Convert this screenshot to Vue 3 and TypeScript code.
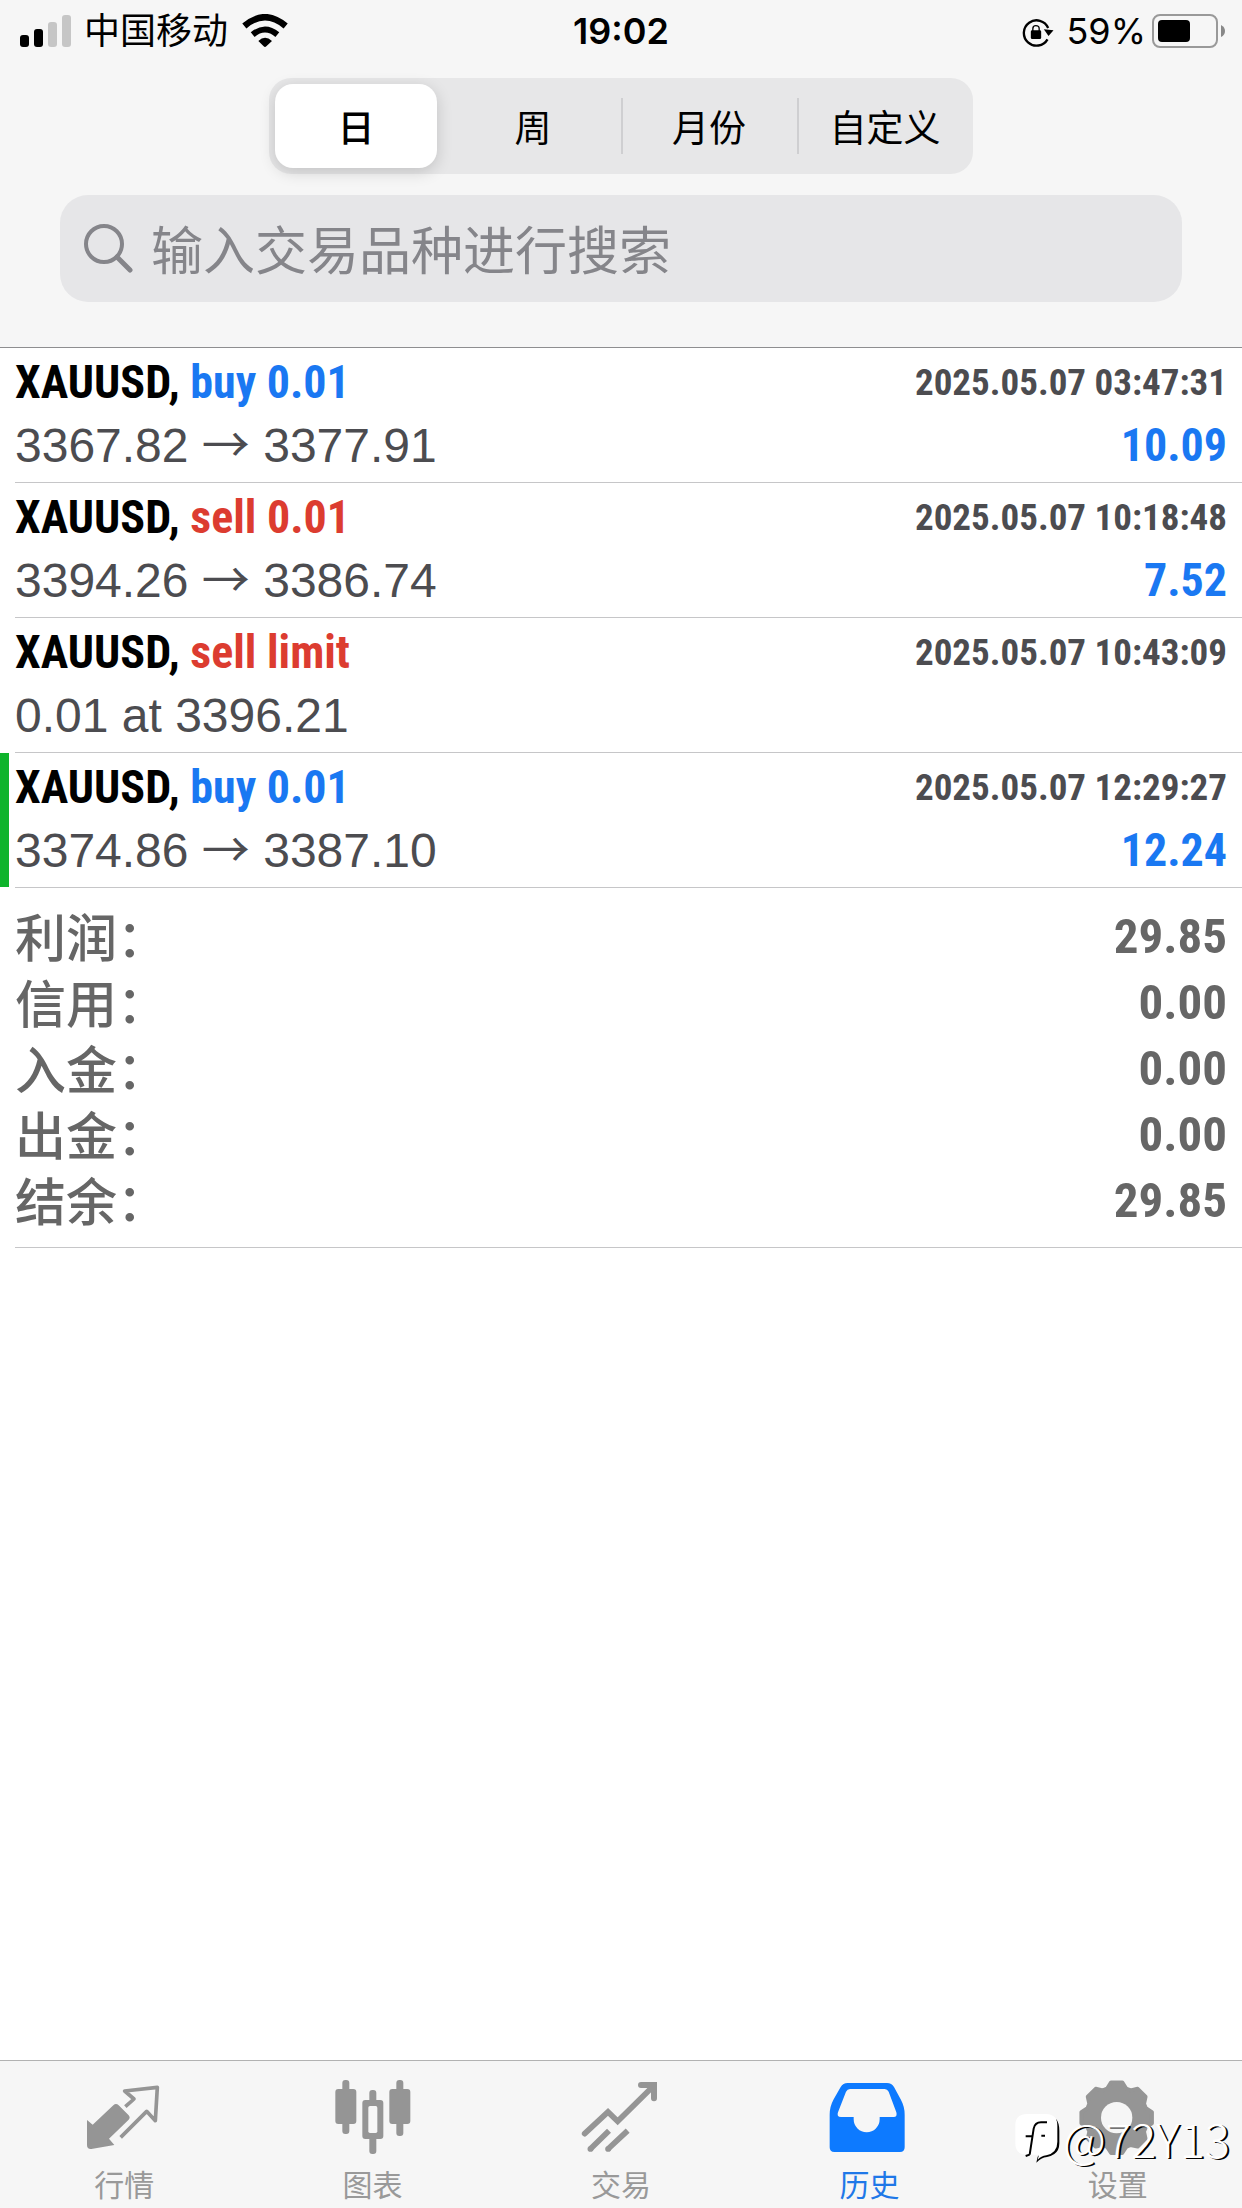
<script setup lang="ts">
import { ref } from 'vue'

interface Deal {
  symbol: string
  action: string
  side: 'buy' | 'sell'
  from: string
  to?: string
  time: string
  profit?: string
  marked?: boolean
}

const periods: string[] = ['日', '周', '月份', '自定义']
const period = ref<number>(0)
const query = ref<string>('')

const deals: Deal[] = [
  { symbol: 'XAUUSD', action: 'buy 0.01', side: 'buy', from: '3367.82', to: '3377.91', time: '2025.05.07 03:47:31', profit: '10.09' },
  { symbol: 'XAUUSD', action: 'sell 0.01', side: 'sell', from: '3394.26', to: '3386.74', time: '2025.05.07 10:18:48', profit: '7.52' },
  { symbol: 'XAUUSD', action: 'sell limit', side: 'sell', from: '0.01 at 3396.21', time: '2025.05.07 10:43:09' },
  { symbol: 'XAUUSD', action: 'buy 0.01', side: 'buy', from: '3374.86', to: '3387.10', time: '2025.05.07 12:29:27', profit: '12.24', marked: true },
]

const totals: { label: string; value: string }[] = [
  { label: '利润', value: '29.85' },
  { label: '信用', value: '0.00' },
  { label: '入金', value: '0.00' },
  { label: '出金', value: '0.00' },
  { label: '结余', value: '29.85' },
]

// Outline of an eight-toothed gear around (cx, cy)
function gear(cx: number, cy: number): string {
  const at = (deg: number, r: number): string => {
    const a = ((deg - 90) * Math.PI) / 180
    return `${(cx + r * Math.cos(a)).toFixed(1)} ${(cy + r * Math.sin(a)).toFixed(1)}`
  }
  const points: string[] = []
  for (let k = 0; k < 8; k++) {
    const m = k * 45
    points.push(at(m - 18, 92), at(m - 9, 107), at(m + 9, 107), at(m + 18, 92))
  }
  return `M${points.join('L')}Z`
}
const gearPath = gear(409, 203)
</script>

<template>
  <div class="app">
    <header class="top">
      <div class="status">
        <div class="status-side">
          <svg class="signal" viewBox="0 0 52 34" aria-hidden="true">
            <rect x="0" y="21" width="9" height="12" rx="3" />
            <rect x="14" y="15" width="9" height="18" rx="3" />
            <rect x="28" y="8" width="9" height="25" rx="3" fill="#c6c6c6" />
            <rect x="42" y="1" width="9" height="32" rx="3" fill="#c6c6c6" />
          </svg>
          <span class="carrier">中国移动</span>
          <svg class="wifi" viewBox="729 37 138 102" aria-hidden="true">
            <path d="M736 73Q798 20 860 73" fill="none" stroke="#000" stroke-width="19" />
            <path d="M761 99Q798 68 835 99" fill="none" stroke="#000" stroke-width="18" />
            <path d="M778 118Q798 98 819 118L802 134Q798 138 794 134Z" />
          </svg>
        </div>
        <span class="clock">19:02</span>
        <div class="status-side status-right">
          <svg class="lock" viewBox="244 48 98 93" aria-hidden="true">
            <path d="M323 118A38 38 0 1 1 325 84" fill="none" stroke="#000" stroke-width="7" />
            <path d="M312 88L341 91L326 108Z" />
            <rect x="273" y="91" width="31" height="26" rx="4" />
            <path d="M279 94V86Q279 77 288 77Q298 77 298 86V94" fill="none" stroke="#000" stroke-width="4" />
          </svg>
          <span class="percent">59%</span>
          <svg class="battery" viewBox="0 0 74 34" aria-hidden="true">
            <rect x="1" y="1" width="64" height="32" rx="7" fill="none" stroke="#999" stroke-width="2" />
            <rect x="6" y="6" width="32" height="22" rx="4" />
            <path d="M69 11Q73 13 73 17Q73 21 69 23Z" fill="#888" />
          </svg>
        </div>
      </div>

      <div class="segments">
        <button
          v-for="(name, i) in periods"
          :key="name"
          type="button"
          class="segment"
          :class="{ on: period === i, ruled: i > 1 }"
          :aria-pressed="period === i"
          @click="period = i"
        >
          {{ name }}
        </button>
      </div>

      <label class="search">
        <svg class="glass" viewBox="0 0 50 50" aria-hidden="true">
          <circle cx="20" cy="20" r="18" fill="none" stroke="#85858a" stroke-width="4" />
          <path d="M33 33L46 46" stroke="#85858a" stroke-width="5" stroke-linecap="round" />
        </svg>
        <input v-model="query" type="search" placeholder="输入交易品种进行搜索" aria-label="输入交易品种进行搜索" />
      </label>
    </header>

    <main class="history">
      <ul class="deals">
        <li v-for="deal in deals" :key="deal.time" class="deal" :class="{ marked: deal.marked }">
          <div class="deal-body">
            <div class="line">
              <span class="title">{{ deal.symbol }}, <span :class="deal.side">{{ deal.action }}</span></span>
              <time class="time">{{ deal.time }}</time>
            </div>
            <div class="line">
              <span class="price">{{ deal.from }}<template v-if="deal.to">&nbsp;<span class="arrow">→</span>&nbsp;{{ deal.to }}</template></span>
              <span v-if="deal.profit" class="profit">{{ deal.profit }}</span>
            </div>
          </div>
        </li>
      </ul>
      <dl class="totals">
        <div v-for="row in totals" :key="row.label" class="total">
          <dt>{{ row.label }}：</dt>
          <dd>{{ row.value }}</dd>
        </div>
      </dl>
    </main>

    <nav class="tabs">
      <a class="tab" href="#quotes">
        <svg viewBox="102 81 240 240" aria-hidden="true">
          <path d="M111 210L128 224L190 166Q198 158 206 166L236 196Q242 203 236 209L177 266L193 285L124 297Q111 298 111 285Z" fill="#959595" />
          <path d="M226 170L252 147L224 123L322 112L316 212L290 184L212 262" fill="none" stroke="#959595" stroke-width="11" stroke-linejoin="round" />
        </svg>
        <span>行情</span>
      </a>
      <a class="tab" href="#charts">
        <svg viewBox="848 81 240 240" fill="#959595" aria-hidden="true">
          <rect x="876" y="90" width="21" height="162" rx="9" />
          <rect x="855" y="117" width="63" height="105" rx="9" />
          <rect x="1038" y="90" width="21" height="168" rx="9" />
          <rect x="1017" y="117" width="63" height="105" rx="9" />
          <rect x="957" y="120" width="21" height="192" rx="9" />
          <rect x="936" y="150" width="63" height="117" rx="9" />
          <rect x="954" y="168" width="27" height="81" rx="5" fill="#f6f6f6" />
        </svg>
        <span>图表</span>
      </a>
      <a class="tab" href="#trade">
        <svg viewBox="123 81 240 240" fill="none" stroke="#959595" stroke-width="17" aria-hidden="true">
          <path d="M134 251L204 186L233 214L338 110" stroke-linecap="round" />
          <path d="M303 105H342V145" stroke-width="18" stroke-linecap="round" />
          <path d="M151 297L207 242M204 297L263 242" />
          <path d="M151 297H152M204 297H205" stroke-linecap="round" />
        </svg>
        <span>交易</span>
      </a>
      <a class="tab current" href="#history" aria-current="page">
        <svg viewBox="868 81 240 240" aria-hidden="true">
          <path d="M924 99H1042Q1056 99 1063 111L1083 148Q1095 170 1095 194V292Q1095 306 1081 306H884Q870 306 870 292V194Q870 170 882 148L903 111Q910 99 924 99Z" fill="#0d7aff" />
          <path d="M931 117H1035Q1043 117 1047 125L1070 187Q1074 201 1062 201H1020V208A39 39 0 0 1 942 208V201H904Q890 201 895 187L919 125Q923 117 931 117Z" fill="#f6f6f6" />
        </svg>
        <span>历史</span>
      </a>
      <a class="tab" href="#settings">
        <svg viewBox="293 81 240 240" aria-hidden="true">
          <path :d="gearPath" fill="#959595" stroke="#959595" stroke-width="12" stroke-linejoin="round" />
          <circle cx="409" cy="203" r="47" fill="#f6f6f6" />
        </svg>
        <span>设置</span>
      </a>
      <div class="stamp">
        <svg viewBox="99 209 141 153" aria-hidden="true">
          <path d="M226 228Q235 240 235 262V300Q235 322 220 332Q208 340 198 341Q180 343 166 358L170 340L190 320Z" fill="#000" />
          <path d="M137 212H194Q229 212 229 247V295Q229 328 196 336Q180 338 170 349L174 334H137Q103 334 103 299V247Q103 212 137 212Z" fill="#fff" />
          <path d="M198 237H180Q162 237 158 256L146 334M134 279H156M181 277H192M146 334L134 338" fill="none" stroke="#000" stroke-width="6" />
        </svg>
        <span>@72Y13</span>
      </div>
    </nav>
  </div>
</template>

<style>
body {
  margin: 0;
  background: #fff;
}
</style>

<style scoped>
.app {
  display: flex;
  flex-direction: column;
  min-height: 100vh;
  font-family: "Liberation Sans", "Noto Sans CJK SC", sans-serif;
  color: #000;
}

.top {
  display: flex;
  flex-direction: column;
  padding-bottom: 45px;
  background: #f6f6f6;
  border-bottom: 1px solid #8e8e90;
}

.status {
  display: grid;
  grid-template-columns: 1fr auto 1fr;
  align-items: center;
  height: 62px;
  padding: 0 16px;
  font-family: Inter, "Noto Sans CJK SC", sans-serif;
  font-size: 36px;
  line-height: 60px;
}
.status-side {
  display: flex;
  align-items: center;
}
.status-right {
  justify-content: flex-end;
}
.signal {
  width: 52px;
  height: 34px;
  margin-left: 4px;
}
.carrier {
  margin: 0 14px 0 12px;
}
.wifi {
  width: 46px;
  height: 34px;
}
.clock {
  font-weight: 600;
}
.lock {
  width: 33px;
  height: 31px;
}
.percent {
  margin: 0 6px 0 12px;
}
.battery {
  width: 74px;
  height: 34px;
}

.segments {
  display: grid;
  grid-template-columns: repeat(4, 1fr);
  align-self: center;
  width: 100%;
  max-width: 704px;
  height: 96px;
  margin-top: 16px;
  background: #e7e7e8;
  border-radius: 22px;
}
.segment {
  position: relative;
  padding: 0;
  border: 0;
  background: none;
  border-radius: 18px;
  color: #000;
  font-family: "Noto Sans CJK SC", sans-serif;
  font-size: 37px;
  line-height: 84px;
}
.segment.on {
  margin: 6px 8px 6px 6px;
  background: #fff;
  font-weight: 500;
  box-shadow: 0 4px 16px rgba(0, 0, 0, 0.16);
}
.segment.ruled::before {
  content: "";
  position: absolute;
  left: 0;
  top: 20px;
  bottom: 20px;
  width: 2px;
  background: #cfcfd1;
}

.search {
  display: flex;
  align-items: center;
  gap: 17px;
  height: 107px;
  margin: 21px 60px 0;
  padding: 0 24px;
  background: #e6e6e8;
  border-radius: 28px;
}
.glass {
  flex: none;
  width: 50px;
  height: 50px;
}
.search input {
  flex: 1;
  min-width: 0;
  height: 76px;
  padding: 0 0 2px;
  border: 0;
  outline: 0;
  background: none;
  appearance: none;
  color: #000;
  font-family: "Noto Sans CJK SC", sans-serif;
  font-size: 52px;
}
.search input::placeholder {
  color: #85858a;
  opacity: 1;
}

.history {
  flex: 1;
}
.deals {
  margin: 0;
  padding: 0;
  list-style: none;
}
.deal {
  position: relative;
  padding-left: 15px;
}
.deal.marked::before {
  content: "";
  position: absolute;
  left: 0;
  top: 0;
  bottom: 1px;
  width: 9px;
  background: #0fb42c;
}
.deal-body {
  padding: 3px 15px 5px 0;
  border-bottom: 1px solid #c6c6c8;
}
.line {
  display: flex;
  justify-content: space-between;
  height: 63px;
  line-height: 63px;
  font-size: 48px;
  white-space: nowrap;
}
.title,
.time,
.profit,
.total dd {
  font-family: "Roboto Condensed", "Liberation Sans", sans-serif;
  font-weight: 700;
}
.title,
.profit {
  font-size: 46px;
}
.buy,
.profit {
  color: #1a78f2;
}
.sell {
  color: #dc3c30;
}
.time {
  color: #4c4c50;
  font-size: 37px;
}
.price {
  color: #4c4c50;
}
.arrow {
  font-family: "Noto Sans CJK SC", sans-serif;
  line-height: 48px;
}

.totals {
  margin: 0 0 0 15px;
  padding: 16px 15px 13px 0;
  border-bottom: 1px solid #c6c6c8;
  color: #666;
}
.total {
  display: flex;
  justify-content: space-between;
  height: 66px;
  line-height: 66px;
}
.total dt {
  font-family: "Noto Sans CJK SC", sans-serif;
  font-size: 51px;
  font-weight: 500;
  line-height: 62px;
}
.total dd {
  margin: 0;
  font-size: 49px;
}

.tabs {
  position: relative;
  display: grid;
  grid-template-columns: repeat(5, 1fr);
  background: #f6f6f6;
  border-top: 1px solid #b2b2b2;
}
.tab {
  display: flex;
  flex-direction: column;
  align-items: center;
  gap: 2px;
  padding: 16px 0 0;
  color: #999;
  font-family: "Noto Sans CJK SC", sans-serif;
  font-size: 30px;
  line-height: 49px;
  text-decoration: none;
}
.tab.current {
  color: #1f78e8;
}
.tab svg {
  width: 80px;
  height: 80px;
}
.stamp {
  position: absolute;
  right: 12px;
  bottom: 42px;
  display: flex;
  align-items: center;
  gap: 2px;
  color: #fff;
  font-family: "Noto Sans CJK SC", sans-serif;
  font-size: 47px;
  font-weight: 300;
  line-height: 56px;
  text-shadow: 2px 1px 0 #000;
}
.stamp svg {
  width: 47px;
  height: 51px;
}
</style>
